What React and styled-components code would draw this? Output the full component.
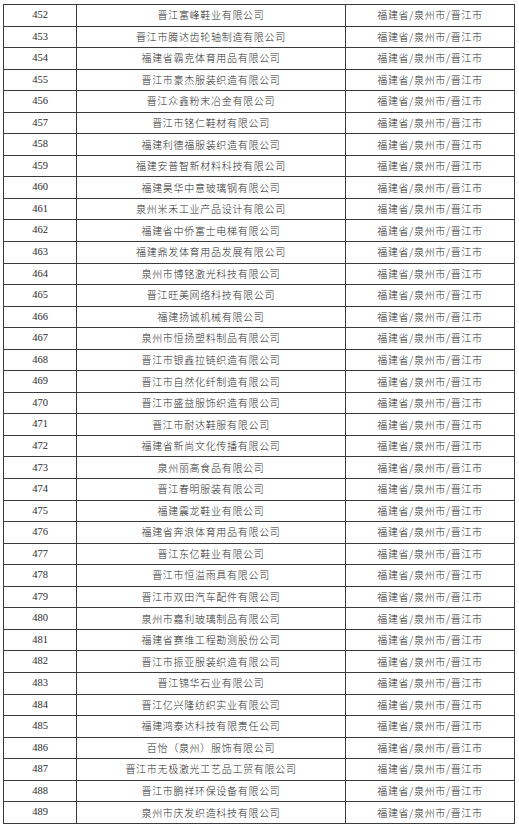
import React from "react";
import styled, { createGlobalStyle } from "styled-components";

const GlobalStyle = createGlobalStyle`
	html, body {
		margin: 0;
		padding: 0;
		background: #ffffff;
	}
`;

const Page = styled.div`
	padding: 4px 0 0 3px;
`;

const Table = styled.table`
	border-collapse: collapse;
	width: 511px;
	height: 820px;
	table-layout: fixed;
	border: 1.5px solid #3a3a3a;
	font-family: "Liberation Serif", "Noto Sans CJK SC", serif;
	color: #2b2b2b;
`;

const Row = styled.tr`
	height: 21.55px;
`;

const Cell = styled.td`
	border: 1px solid #3a3a3a;
	padding: 0;
	text-align: center;
	vertical-align: middle;
	font-size: ${(p) => (p.$num ? "10.5px" : "10px")};
	letter-spacing: ${(p) => (p.$num ? "0" : "0.7px")};
	font-family: ${(p) =>
		p.$num
			? `"Liberation Serif", serif`
			: `"Noto Sans CJK SC", "Liberation Serif", sans-serif`};
	font-weight: 300;
	white-space: nowrap;
	line-height: 1;
`;

const companies = [
	"晋江富峰鞋业有限公司",
	"晋江市腾达齿轮轴制造有限公司",
	"福建省霸克体育用品有限公司",
	"晋江市豪杰服装织造有限公司",
	"晋江众鑫粉末冶金有限公司",
	"晋江市铭仁鞋材有限公司",
	"福建利德福服装织造有限公司",
	"福建安普智新材料科技有限公司",
	"福建昊华中意玻璃钢有限公司",
	"泉州米禾工业产品设计有限公司",
	"福建省中侨富士电梯有限公司",
	"福建鼎发体育用品发展有限公司",
	"泉州市博铭激光科技有限公司",
	"晋江旺美网络科技有限公司",
	"福建扬诚机械有限公司",
	"泉州市恒扬塑料制品有限公司",
	"晋江市银鑫拉链织造有限公司",
	"晋江市自然化纤制造有限公司",
	"晋江市盛益服饰织造有限公司",
	"晋江市耐达鞋服有限公司",
	"福建省新尚文化传播有限公司",
	"泉州丽高食品有限公司",
	"晋江春明服装有限公司",
	"福建震龙鞋业有限公司",
	"福建省奔浪体育用品有限公司",
	"晋江东亿鞋业有限公司",
	"晋江市恒溢雨具有限公司",
	"晋江市双田汽车配件有限公司",
	"泉州市嘉利玻璃制品有限公司",
	"福建省赛维工程勘测股份公司",
	"晋江市振亚服装织造有限公司",
	"晋江锦华石业有限公司",
	"晋江亿兴隆纺织实业有限公司",
	"福建鸿泰达科技有限责任公司",
	"百怡（泉州）服饰有限公司",
	"晋江市无极激光工艺品工贸有限公司",
	"晋江市鹏祥环保设备有限公司",
	"泉州市庆发织造科技有限公司",
];

const REGION = "福建省/泉州市/晋江市";

export default function App() {
	return (
		<>
			<GlobalStyle />
			<Page>
				<Table>
					<colgroup>
						<col style={{ width: 73 }} />
						<col style={{ width: 269 }} />
						<col style={{ width: 169 }} />
					</colgroup>
					<tbody>
						{companies.map((name, i) => (
							<Row key={i}>
								<Cell $num>{452 + i}</Cell>
								<Cell>{name}</Cell>
								<Cell>{REGION}</Cell>
							</Row>
						))}
					</tbody>
				</Table>
			</Page>
		</>
	);
}
